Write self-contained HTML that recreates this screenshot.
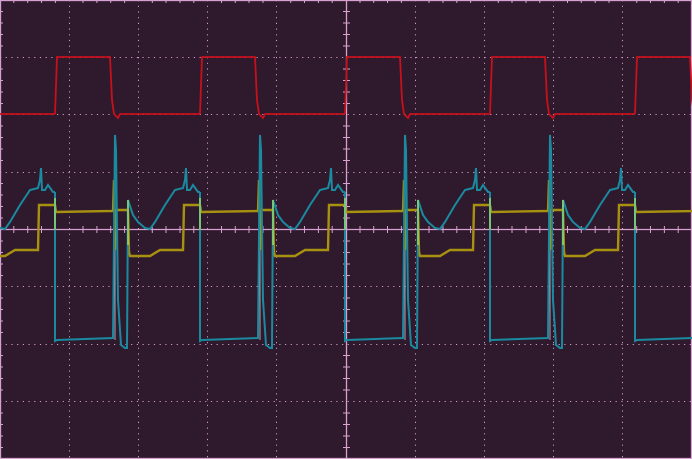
<!DOCTYPE html>
<html><head><meta charset="utf-8"><style>
html,body{margin:0;padding:0;background:#2e1a2c;width:692px;height:459px;overflow:hidden}
svg{display:block}
</style></head><body>
<svg width="692" height="459" viewBox="0 0 692 459" xmlns="http://www.w3.org/2000/svg">
<rect width="692" height="459" fill="#2e1a2c"/>
<defs>
<g id="per">
<polyline fill="none" stroke="#c8101c" stroke-width="1.8" points="55,114 57,57 110,57 112,100 114,114 118,118 120,114 200,114"/>
<line x1="115" y1="136" x2="115" y2="340" stroke="#b8a0b0" stroke-width="1"/>
<polyline fill="none" stroke="#a89010" stroke-width="2.4" points="55,205 56,212 113,211 114,180 115,250 116,210 128,210 129,252 130,256 150,256 160,250 183,250 184,205 200,205"/>
<polyline fill="none" stroke="#1a8aa0" stroke-width="2" points="55,192 55,341 57,340 113,338 115,135 116,150 118,300 121,345 125,348 127,348 128,200 133,215 138,222 145,228 150,229 155,222 165,205 175,190 183,188 185,180 186,168 187,190 190,190 193,185 198,192 200,192"/>
<line x1="55" y1="198" x2="55" y2="230" stroke="#b0f060" stroke-width="1.2"/>
<line x1="128" y1="200" x2="128" y2="245" stroke="#b0f060" stroke-width="1.2"/>
</g>
</defs>
<g stroke="#d098c8" stroke-width="1" stroke-dasharray="1.2,4.5" fill="none">
<line x1="69.5" y1="0" x2="69.5" y2="459"/><line x1="138.5" y1="0" x2="138.5" y2="459"/>
<line x1="207.5" y1="0" x2="207.5" y2="459"/><line x1="276.5" y1="0" x2="276.5" y2="459"/>
<line x1="415.5" y1="0" x2="415.5" y2="459"/><line x1="484.5" y1="0" x2="484.5" y2="459"/>
<line x1="553.5" y1="0" x2="553.5" y2="459"/><line x1="622.5" y1="0" x2="622.5" y2="459"/>
<line x1="0" y1="57.5" x2="692" y2="57.5"/><line x1="0" y1="114.5" x2="692" y2="114.5"/>
<line x1="0" y1="172.5" x2="692" y2="172.5"/><line x1="0" y1="286.5" x2="692" y2="286.5"/>
<line x1="0" y1="344.5" x2="692" y2="344.5"/><line x1="0" y1="401.5" x2="692" y2="401.5"/>
</g>
<g stroke="#d8a0d0" stroke-width="1.3" fill="none">
<rect x="0.5" y="0.5" width="691" height="458"/>
<line x1="346.5" y1="0" x2="346.5" y2="459"/>
<line x1="0" y1="229.5" x2="692" y2="229.5"/>
</g>
<g stroke="#d8a0d0" stroke-width="1">
<path d="M13.8 226v7M27.7 226v7M41.5 226v7M55.4 226v7M83 226v7M96.9 226v7M110.7 226v7M124.6 226v7M152.3 226v7M166 226v7M180 226v7M193.8 226v7M221.5 226v7M235.3 226v7M249 226v7M263 226v7M290.7 226v7M304.5 226v7M318.4 226v7M332.2 226v7M360 226v7M373.7 226v7M387.5 226v7M401.4 226v7M429 226v7M443 226v7M456.8 226v7M470.6 226v7M498.3 226v7M512 226v7M526 226v7M539.8 226v7M567.5 226v7M581.3 226v7M595.2 226v7M609 226v7M636.7 226v7M650.5 226v7M664.4 226v7M678.2 226v7"/>
<path d="M343 11.5h7M343 23h7M343 34.5h7M343 46h7M343 69h7M343 80.5h7M343 92h7M343 103.5h7M343 126h7M343 137.5h7M343 149h7M343 160.5h7M343 183.5h7M343 195h7M343 206.5h7M343 218h7M343 241h7M343 252.5h7M343 264h7M343 275.5h7M343 298h7M343 309.5h7M343 321h7M343 332.5h7M343 355.5h7M343 367h7M343 378.5h7M343 390h7M343 413h7M343 424.5h7M343 436h7M343 447.5h7"/>
<path d="M0 11.5h3M0 23h3M0 34.5h3M0 46h3M0 69h3M0 80.5h3M0 92h3M0 103.5h3M0 126h3M0 137.5h3M0 149h3M0 160.5h3M0 183.5h3M0 195h3M0 206.5h3M0 218h3M0 241h3M0 252.5h3M0 264h3M0 275.5h3M0 298h3M0 309.5h3M0 321h3M0 332.5h3M0 355.5h3M0 367h3M0 378.5h3M0 390h3M0 413h3M0 424.5h3M0 436h3M0 447.5h3"/>
<path d="M13.8 0v3M27.7 0v3M41.5 0v3M55.4 0v3M83 0v3M96.9 0v3M110.7 0v3M124.6 0v3M152.3 0v3M166 0v3M180 0v3M193.8 0v3M221.5 0v3M235.3 0v3M249 0v3M263 0v3M290.7 0v3M304.5 0v3M318.4 0v3M332.2 0v3M360 0v3M373.7 0v3M387.5 0v3M401.4 0v3M429 0v3M443 0v3M456.8 0v3M470.6 0v3M498.3 0v3M512 0v3M526 0v3M539.8 0v3M567.5 0v3M581.3 0v3M595.2 0v3M609 0v3M636.7 0v3M650.5 0v3M664.4 0v3M678.2 0v3"/>
</g>
<use href="#per" transform="translate(-145,0)"/>
<use href="#per"/>
<use href="#per" transform="translate(145,0)"/>
<use href="#per" transform="translate(290,0)"/>
<use href="#per" transform="translate(435,0)"/>
<use href="#per" transform="translate(580,0)"/>
</svg>
</body></html>
